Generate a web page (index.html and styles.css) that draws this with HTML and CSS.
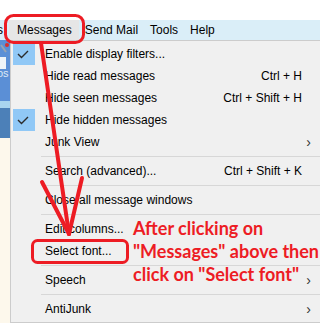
FILE: index.html
```html
<!DOCTYPE html>
<html lang="en">
<head>
    <meta charset="UTF-8">
    <title>Messages menu - Select font</title>
    <link rel="stylesheet" href="styles.css">
</head>
<body>
    <div class="screen">
        <div class="titlebar"></div>

        <div class="menubar">
            <span class="menubar-item cut">s</span>
            <span class="menubar-item active">Messages</span>
            <span class="menubar-item">Send Mail</span>
            <span class="menubar-item">Tools</span>
            <span class="menubar-item">Help</span>
        </div>

        <div class="main">
            <div class="side">
                <div class="side-toolbar">
                    <svg class="side-icon" width="10" height="12" viewBox="0 0 10 12">
                        <path d="M1 2 L6 9" stroke="#9aa4b0" stroke-width="2"/>
                        <circle cx="7" cy="2" r="2" fill="#d9302c"/>
                    </svg>
                    <div class="side-box"></div>
                    <div class="side-text">os</div>
                </div>
                <div class="side-strip"></div>
                <div class="side-dark"></div>
                <div class="side-list"></div>
            </div>

            <div class="dropdown">
                <div class="item checked">
                    <span class="check">
                        <svg width="22" height="22" viewBox="0 0 22 22"><polyline points="5,11 8.5,14.5 15,8" fill="none" stroke="#2b2b2b" stroke-width="1.4"/></svg>
                    </span>
                    <span class="label">Enable display filters...</span>
                </div>
                <div class="item">
                    <span class="label">Hide read messages</span>
                    <span class="shortcut">Ctrl + H</span>
                </div>
                <div class="item">
                    <span class="label">Hide seen messages</span>
                    <span class="shortcut">Ctrl + Shift + H</span>
                </div>
                <div class="item checked">
                    <span class="check">
                        <svg width="22" height="22" viewBox="0 0 22 22"><polyline points="5,11 8.5,14.5 15,8" fill="none" stroke="#2b2b2b" stroke-width="1.4"/></svg>
                    </span>
                    <span class="label">Hide hidden messages</span>
                </div>
                <div class="item">
                    <span class="label">Junk View</span>
                    <span class="arrow">&rsaquo;</span>
                </div>
                <div class="separator"></div>
                <div class="item">
                    <span class="label">Search (advanced)...</span>
                    <span class="shortcut">Ctrl + Shift + K</span>
                </div>
                <div class="separator"></div>
                <div class="item">
                    <span class="label">Close all message windows</span>
                </div>
                <div class="separator"></div>
                <div class="item">
                    <span class="label">Edit columns...</span>
                </div>
                <div class="item">
                    <span class="label">Select font...</span>
                </div>
                <div class="separator"></div>
                <div class="item">
                    <span class="label">Speech</span>
                    <span class="arrow">&rsaquo;</span>
                </div>
                <div class="separator"></div>
                <div class="item">
                    <span class="label">AntiJunk</span>
                    <span class="arrow">&rsaquo;</span>
                </div>
            </div>
        </div>

        <!-- red annotation drawn over the screenshot -->
        <svg class="marks" width="320" height="323" viewBox="0 0 320 323">
            <rect x="5.5" y="15.5" width="78" height="27" rx="8" fill="none" stroke="#ed1c24" stroke-width="3"/>
            <rect x="32.5" y="240.5" width="95" height="22" rx="5" fill="none" stroke="#ed1c24" stroke-width="3"/>
            <g stroke="#ed1c24" stroke-width="4" stroke-linecap="round">
                <line x1="41" y1="43" x2="69" y2="234"/>
                <line x1="42" y1="182" x2="69" y2="234"/>
                <line x1="82" y1="178" x2="69" y2="234"/>
            </g>
        </svg>
        <div class="note">After clicking on<br>"Messages" above then<br>click on "Select font"</div>
    </div>
</body>
</html>
```

FILE: styles.css
```css
body {
    margin: 0;
    background: #ffffff;
    font-family: "Liberation Sans", Arial, sans-serif;
    font-size: 12px;
    color: #000;
}
.screen {
    position: relative;
    width: 320px;
    height: 323px;
    overflow: hidden;
    display: flex;
    flex-direction: column;
}
.titlebar {
    height: 20px;
    background: #ffffff;
}
.menubar {
    height: 20px;
    display: flex;
    align-items: stretch;
    background: #daeef8;
    white-space: nowrap;
}
.menubar-item {
    display: flex;
    align-items: center;
    padding: 0 6px;
}
.menubar-item.cut {
    padding: 0;
    margin-left: -3px;
    width: 12px;
}
.menubar-item.active {
    background: #e6e6e6;
    padding: 0 7px 0 8px;
}
.main {
    flex: 1;
    display: flex;
}
.side {
    width: 10px;
    display: flex;
    flex-direction: column;
}
.side-toolbar {
    height: 61px;
    background: #5b8fd6;
    padding-top: 3px;
    box-sizing: border-box;
}
.side-icon {
    display: block;
}
.side-box {
    width: 6px;
    height: 12px;
    margin-top: 2px;
    background: #eef3f8;
}
.side-text {
    color: #dfe9f5;
    font-size: 11px;
    margin-left: -3px;
    margin-top: -2px;
}
.side-strip {
    height: 7px;
    background: #a9d5ef;
}
.side-dark {
    height: 30px;
    background: #4c80b8;
}
.side-list {
    flex: 1;
    background: #fdf8ec;
}
.dropdown {
    flex: 1;
    background: #f0f0f0;
    border: 1px solid #cccccc;
    border-right: none;
    padding-top: 2px;
}
.item {
    position: relative;
    height: 22px;
    display: flex;
    align-items: center;
    padding-left: 34px;
    padding-right: 18px;
    white-space: nowrap;
}
.label {
    flex: 1;
}
.shortcut {
    text-align: right;
}
.arrow {
    font-size: 14px;
    color: #333;
    margin-right: -9px;
}
.check {
    position: absolute;
    left: 2px;
    top: 0;
    width: 22px;
    height: 22px;
    background: #90c8f6;
}
.check svg {
    display: block;
}
.separator {
    height: 1px;
    margin: 3px 0 3px 30px;
    background: #d7d7d7;
}
.marks {
    position: absolute;
    top: 0;
    left: 0;
    pointer-events: none;
}
.note {
    position: absolute;
    left: 133px;
    top: 217px;
    color: #ed1c24;
    font-family: Lato, "Liberation Sans", sans-serif;
    font-weight: bold;
    font-size: 18px;
    line-height: 23px;
    white-space: nowrap;
}
```
